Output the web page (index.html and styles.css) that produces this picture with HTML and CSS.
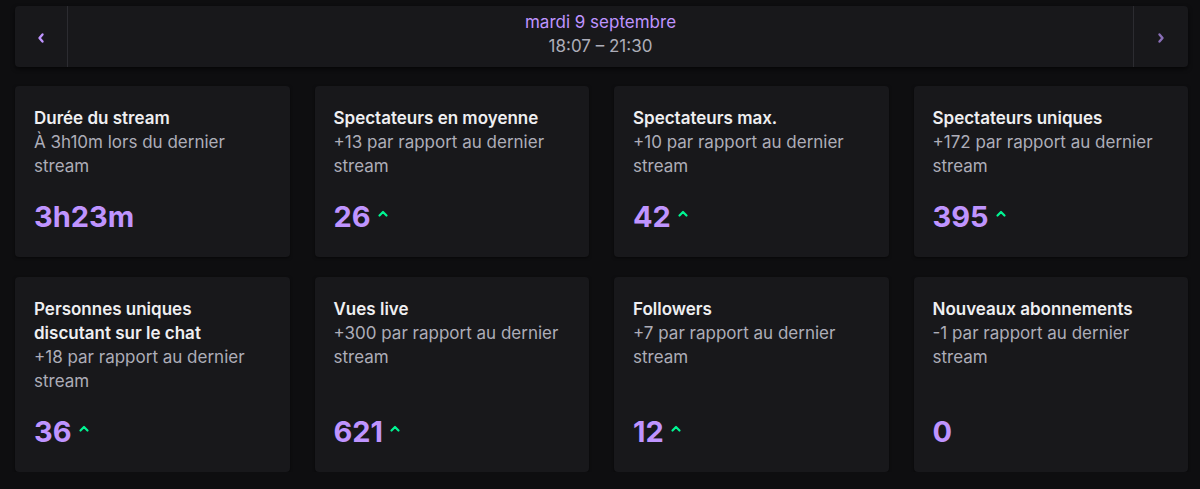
FILE: index.html
```html
<!DOCTYPE html>
<html lang="fr">
<head>
<meta charset="utf-8">
<link rel="stylesheet" href="styles.css">
</head>
<body>
<div class="page">
  <div class="nav">
    <button class="nav-btn">
      <svg width="10" height="12" viewBox="0 0 10 12"><path d="M6.5 2.5 L3.5 6 L6.5 9.5" fill="none" stroke="#bf94ff" stroke-width="2.4" stroke-linecap="round" stroke-linejoin="round"/></svg>
    </button>
    <div class="nav-center">
      <div class="nav-date">mardi 9 septembre</div>
      <div class="nav-time">18:07 – 21:30</div>
    </div>
    <button class="nav-btn nav-btn-right">
      <svg width="10" height="12" viewBox="0 0 10 12"><path d="M3.5 2.5 L6.5 6 L3.5 9.5" fill="none" stroke="#8a6fb8" stroke-width="2.4" stroke-linecap="round" stroke-linejoin="round"/></svg>
    </button>
  </div>

  <div class="grid">
    <div class="card">
      <div class="title">Durée du stream</div>
      <div class="sub">À 3h10m lors du dernier stream</div>
      <div class="value">3h23m</div>
    </div>
    <div class="card">
      <div class="title">Spectateurs en moyenne</div>
      <div class="sub">+13 par rapport au dernier stream</div>
      <div class="value">26 <svg class="up" width="12" height="10" viewBox="0 0 12 10"><path d="M2.5 6.5 L6 3 L9.5 6.5" fill="none" stroke="#00f593" stroke-width="2.2" stroke-linecap="round" stroke-linejoin="round"/></svg></div>
    </div>
    <div class="card">
      <div class="title">Spectateurs max.</div>
      <div class="sub">+10 par rapport au dernier stream</div>
      <div class="value">42 <svg class="up" width="12" height="10" viewBox="0 0 12 10"><path d="M2.5 6.5 L6 3 L9.5 6.5" fill="none" stroke="#00f593" stroke-width="2.2" stroke-linecap="round" stroke-linejoin="round"/></svg></div>
    </div>
    <div class="card">
      <div class="title">Spectateurs uniques</div>
      <div class="sub">+172 par rapport au dernier stream</div>
      <div class="value">395 <svg class="up" width="12" height="10" viewBox="0 0 12 10"><path d="M2.5 6.5 L6 3 L9.5 6.5" fill="none" stroke="#00f593" stroke-width="2.2" stroke-linecap="round" stroke-linejoin="round"/></svg></div>
    </div>
    <div class="card">
      <div class="title">Personnes uniques discutant sur le chat</div>
      <div class="sub">+18 par rapport au dernier stream</div>
      <div class="value">36 <svg class="up" width="12" height="10" viewBox="0 0 12 10"><path d="M2.5 6.5 L6 3 L9.5 6.5" fill="none" stroke="#00f593" stroke-width="2.2" stroke-linecap="round" stroke-linejoin="round"/></svg></div>
    </div>
    <div class="card">
      <div class="title">Vues live</div>
      <div class="sub">+300 par rapport au dernier stream</div>
      <div class="value">621 <svg class="up" width="12" height="10" viewBox="0 0 12 10"><path d="M2.5 6.5 L6 3 L9.5 6.5" fill="none" stroke="#00f593" stroke-width="2.2" stroke-linecap="round" stroke-linejoin="round"/></svg></div>
    </div>
    <div class="card">
      <div class="title">Followers</div>
      <div class="sub">+7 par rapport au dernier stream</div>
      <div class="value">12 <svg class="up" width="12" height="10" viewBox="0 0 12 10"><path d="M2.5 6.5 L6 3 L9.5 6.5" fill="none" stroke="#00f593" stroke-width="2.2" stroke-linecap="round" stroke-linejoin="round"/></svg></div>
    </div>
    <div class="card">
      <div class="title">Nouveaux abonnements</div>
      <div class="sub">-1 par rapport au dernier stream</div>
      <div class="value">0</div>
    </div>
  </div>
</div>
</body>
</html>
```

FILE: styles.css
```css
* { box-sizing: border-box; }
html, body {
  margin: 0;
  background: #0e0e10;
  font-family: Inter, "Noto Sans", sans-serif;
  color: #efeff1;
}
.page {
  padding: 6px 12px 0 15px;
}
.nav {
  display: flex;
  height: 61px;
  background: #18181b;
  border-radius: 4px;
  box-shadow: 0 2px 4px rgba(0,0,0,0.6);
}
.nav-btn {
  width: 53px;
  background: transparent;
  border: 0;
  border-right: 1px solid #2c2c31;
  display: flex;
  align-items: center;
  justify-content: center;
  padding: 0;
  padding-top: 2px;
}
.nav-btn-right {
  border-right: 0;
  border-left: 1px solid #2c2c31;
  width: 55px;
}
.nav-center {
  flex: 1;
  display: flex;
  flex-direction: column;
  align-items: center;
  justify-content: center;
  font-size: 17px;
  line-height: 24px;
  padding-bottom: 6px;
}
.nav-date { color: #bf94ff; }
.nav-time { color: #adadb8; }
.grid {
  margin-top: 19px;
  display: grid;
  grid-template-columns: repeat(4, 1fr);
  column-gap: 25px;
  row-gap: 20px;
}
.card {
  background: #18181b;
  border-radius: 4px;
  padding: 20px 19px 22px 19px;
  display: flex;
  flex-direction: column;
  box-shadow: 0 1px 3px rgba(0,0,0,0.5);
}
.title {
  font-size: 17px;
  font-weight: 600;
  line-height: 24px;
  color: #efeff1;
}
.sub {
  font-size: 17px;
  line-height: 24px;
  color: #adadb8;
}
.value {
  margin-top: auto;
  padding-top: 21px;
  font-size: 29px;
  font-weight: 700;
  line-height: 36px;
  color: #bf94ff;
  display: flex;
  align-items: center;
  gap: 6px;
}
.up {
  margin-top: -6px;
}
```
